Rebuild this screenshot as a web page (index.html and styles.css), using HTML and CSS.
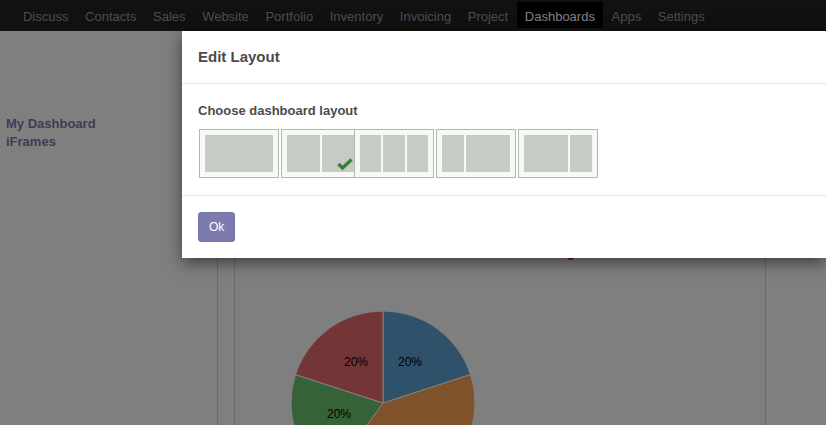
FILE: index.html
```html
<!DOCTYPE html>
<html>
<head>
<meta charset="utf-8">
<title>Dashboards</title>
<link rel="stylesheet" href="styles.css">
</head>
<body>
<div class="app">
  <nav class="topbar">
    <ul class="menu">
      <li><a>Discuss</a></li>
      <li><a>Contacts</a></li>
      <li><a>Sales</a></li>
      <li><a>Website</a></li>
      <li><a>Portfolio</a></li>
      <li><a>Inventory</a></li>
      <li><a>Invoicing</a></li>
      <li><a>Project</a></li>
      <li class="active"><a>Dashboards</a></li>
      <li><a>Apps</a></li>
      <li><a>Settings</a></li>
    </ul>
  </nav>
  <div class="main">
    <aside class="sidebar">
      <a class="side-link">My Dashboard</a>
      <a class="side-link">iFrames</a>
    </aside>
    <section class="board">
      <div class="board-column">
        <div class="legend-row"><span class="legend-dot"></span></div>
        <svg class="pie" width="200" height="122" viewBox="0 0 200 122">
          <path d="M100 100 L100 8 A92 92 0 0 1 187.5 71.57 Z" fill="#60a2d4" stroke="#fff" stroke-width="1"/>
          <path d="M100 100 L187.5 71.57 A92 92 0 0 1 45.92 174.43 Z" fill="#fea452" stroke="#fff" stroke-width="1"/>
          <path d="M100 100 L45.92 174.43 A92 92 0 0 1 12.5 71.57 Z" fill="#6ec46e" stroke="#fff" stroke-width="1"/>
          <path d="M100 100 L12.5 71.57 A92 92 0 0 1 100 8 Z" fill="#e66a6c" stroke="#fff" stroke-width="1"/>
          <text x="115" y="63" class="pie-label">20%</text>
          <text x="61" y="63" class="pie-label">20%</text>
          <text x="44" y="115" class="pie-label">20%</text>
        </svg>
      </div>
    </section>
  </div>
</div>
<div class="backdrop"></div>
<div class="modal">
  <div class="modal-header">
    <h4 class="modal-title">Edit Layout</h4>
  </div>
  <div class="modal-body">
    <div class="choose-label">Choose dashboard layout</div>
    <div class="layouts">
      <div class="layout"><div class="col"></div></div>
      <div class="layout selected">
        <div class="col"></div><div class="col"></div>
        <svg class="check" width="16" height="12" viewBox="0 0 16 12"><polyline points="1.5,6 5.5,10 14.5,1.5" fill="none" stroke="#3b7d3b" stroke-width="3.4" stroke-linejoin="miter"/></svg>
      </div>
      <div class="layout"><div class="col c1"></div><div class="col c1"></div><div class="col c1"></div></div>
      <div class="layout"><div class="col c1"></div><div class="col c2"></div></div>
      <div class="layout"><div class="col c2"></div><div class="col c1"></div></div>
    </div>
  </div>
  <div class="modal-footer">
    <button class="btn-ok">Ok</button>
  </div>
</div>
</body>
</html>
```
FILE: styles.css
```css
* { box-sizing: border-box; }
html, body { margin: 0; padding: 0; }
body {
  width: 826px;
  height: 425px;
  overflow: hidden;
  font-family: "Liberation Sans", Arial, sans-serif;
  font-size: 13px;
  background: #fff;
  position: relative;
}
.app { display: flex; flex-direction: column; height: 425px; overflow: hidden; }
.topbar { height: 31px; background: #222; flex: none; }
.menu {
  list-style: none;
  margin: 0;
  padding: 2px 0 0 14.7px;
  display: flex;
}
.menu li a {
  display: block;
  height: 26px;
  padding: 6px 8.3px 2px;
  line-height: 18px;
  color: #999;
  font-size: 13px;
}
.menu li.active a { background: #000; color: #fff; }
.main { flex: 1; display: flex; background: #fff; }
.sidebar {
  width: 218px;
  border-right: 1px solid #d6d6d6;
  padding: 84px 0 0 6px;
  display: flex;
  flex-direction: column;
}
.side-link {
  color: #7c7bad;
  font-weight: bold;
  font-size: 13px;
  line-height: 18px;
}
.board { flex: 1; padding-left: 16px; }
.board-column {
  width: 532px;
  height: 100%;
  border-left: 1px solid #d6d6d6;
  border-right: 1px solid #d6d6d6;
}
.legend-row { height: 6px; margin-top: 222px; padding-left: 332px; }
.legend-dot {
  display: block;
  width: 7px;
  height: 7px;
  border-radius: 50%;
  background: #d62728;
}
.pie { display: block; margin: 44px 0 0 48px; }
.pie-label { font-family: "Liberation Sans", Arial, sans-serif; font-size: 12px; fill: #000; }
.backdrop {
  position: absolute;
  left: 0; top: 0; right: 0; bottom: 0;
  background: rgba(0, 0, 0, 0.5);
}
.modal {
  position: absolute;
  left: 182px;
  top: 31px;
  right: 0;
  background: #fff;
  box-shadow: 0 5px 15px rgba(0, 0, 0, 0.5);
}
.modal-header { padding: 16px; border-bottom: 1px solid #e5e5e5; }
.modal-title {
  margin: 0;
  font-size: 15px;
  line-height: 20px;
  font-weight: bold;
  color: #4c4c4c;
}
.modal-body { padding: 18px 16px 17px; }
.choose-label {
  font-weight: bold;
  font-size: 13px;
  line-height: 18px;
  color: #4c4c4c;
  margin-bottom: 9px;
}
.layouts { display: flex; gap: 2px; padding-left: 1px; }
.layout {
  position: relative;
  width: 80px;
  height: 49px;
  border: 1px solid #b5b5b5;
  background: #f5faf5;
  padding: 5px;
  display: flex;
  gap: 2px;
}
.layout.selected { margin-right: -9px; }
.col { flex: 1; background: #c6cbc6; }
.col.c1 { flex: 1; }
.col.c2 { flex: 2; }
.check { position: absolute; right: 7px; bottom: 7px; }
.modal-footer { padding: 16px; border-top: 1px solid #e5e5e5; }
.btn-ok {
  display: block;
  height: 30px;
  padding: 0 10px;
  background: #7c7bad;
  border: 1px solid #7574a6;
  border-radius: 3px;
  color: #fff;
  font-family: "Liberation Sans", Arial, sans-serif;
  font-size: 12px;
}
```
